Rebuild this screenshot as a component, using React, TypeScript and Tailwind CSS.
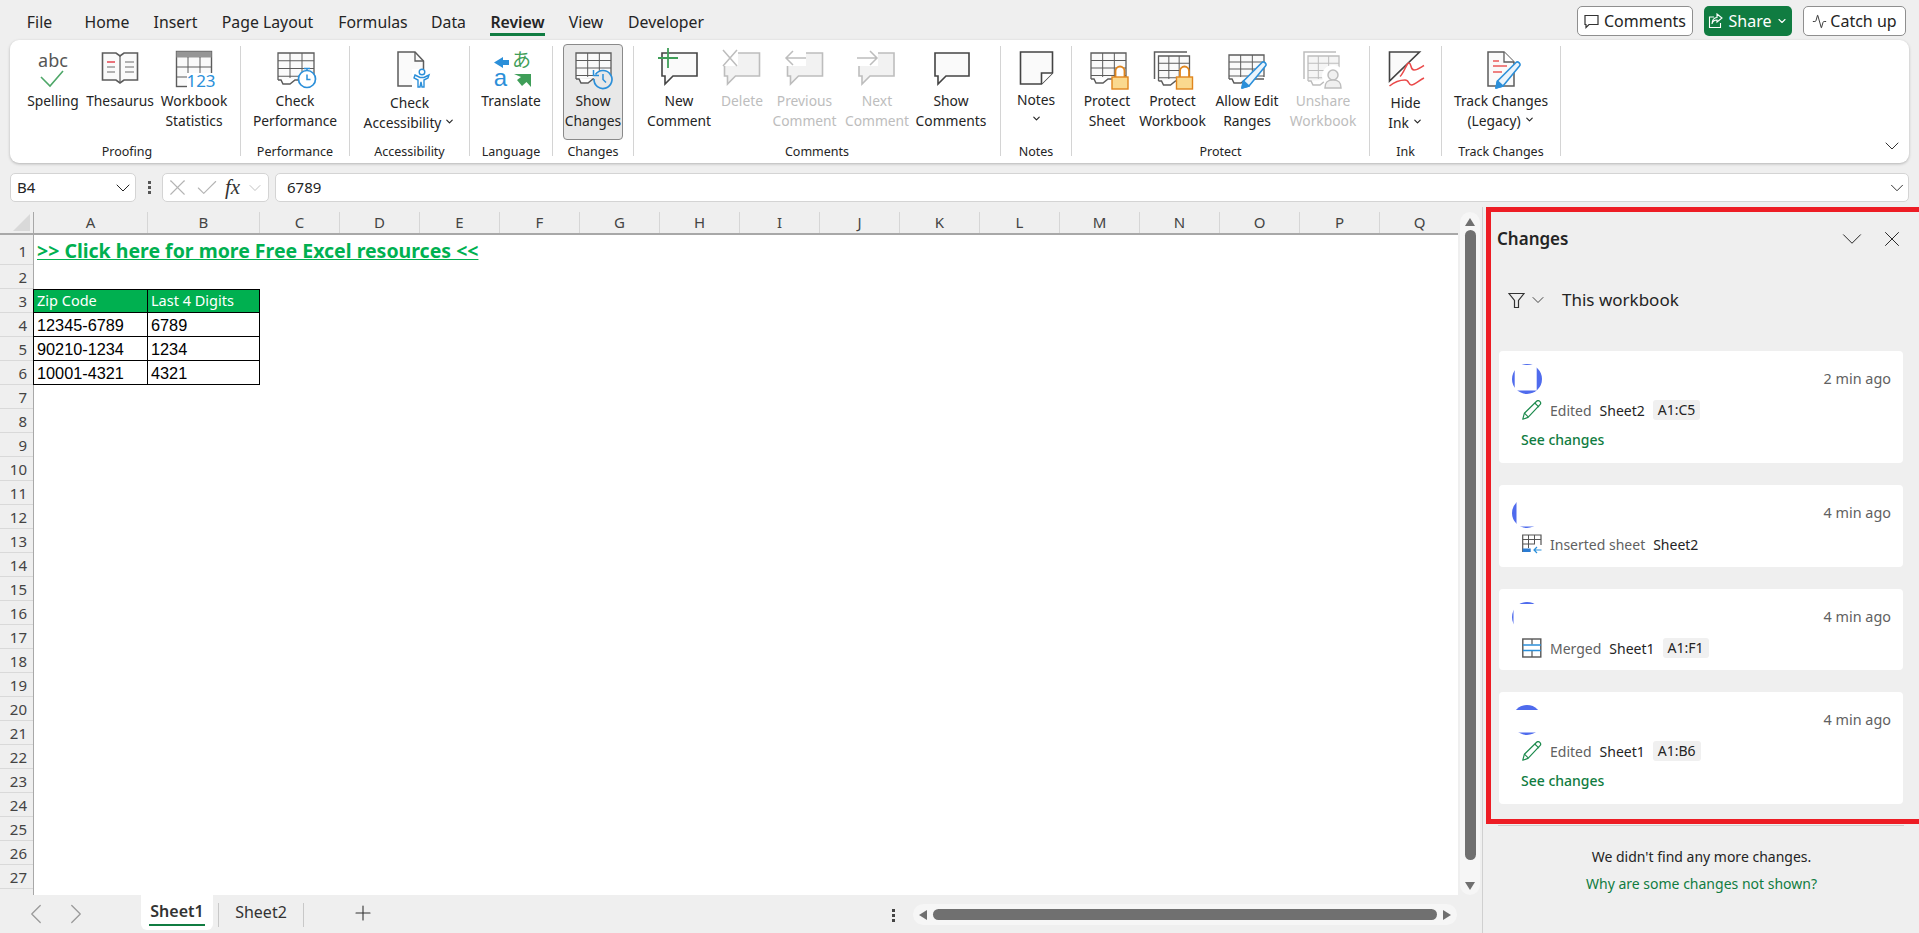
import React from 'react';
import { Activity, Check, ChevronDown, ChevronLeft, ChevronRight, Plus, X } from 'lucide-react';

const BLUE = '#2b8fd9';
const DARK = '#5c5c5c';
const LIGHT = '#bdbdbd';
const FONT = '"Noto Sans", Arial, sans-serif';

const Ico = ({ children }: { children: React.ReactNode }) => (
  <svg width="40" height="40" viewBox="0 0 40 40" fill="none" className="overflow-visible shrink-0">
    {children}
  </svg>
);

// the little sheet with a folded corner that most Review icons share
const Sheet = ({ x, y, w = 35, h = 30, stroke = DARK, fill = '#fafafa' }: { x: number; y: number; w?: number; h?: number; stroke?: string; fill?: string }) => {
  const cw = w / 3;
  const rh = h / 4;
  return (
    <g stroke={stroke} strokeWidth="1.3">
      <path d={`M${x} ${y + h - 4}V${y}H${x + w}V${y + h - 6}`} fill={fill} />
      <path d={`M${x} ${y + h - 4}h3l2 4h7l5-4h${w - 17}`} fill="#fff" strokeWidth="1.5" />
      <path d={`M${x + cw} ${y}v${h - 6}M${x + 2 * cw} ${y}v${h - 6}M${x} ${y + rh}h${w}M${x} ${y + 2 * rh}h${w}M${x} ${y + 3 * rh}h${w}`} strokeWidth="1" />
    </g>
  );
};

const Bubble = ({ x, w = 35, stroke = '#444', fill = '#fafafa' }: { x: number; w?: number; stroke?: string; fill?: string }) => (
  <path d={`M${x} 4H${x + w}V27H${x + 11}L${x + 3} 35V27H${x}Z`} stroke={stroke} strokeWidth="1.6" fill={fill} />
);

const Lock = ({ x }: { x: number }) => (
  <g>
    <path d={`M${x + 3.5} 28v-6a4.5 4.5 0 0 1 9 0v6`} stroke="#e0851d" strokeWidth="1.8" fill="#fff" />
    <rect x={x} y="28" width="16" height="12" fill="#fad98f" stroke="#e0851d" strokeWidth="1.4" />
  </g>
);

const Pencil = ({ x, y, color = BLUE }: { x: number; y: number; color?: string }) => (
  <g stroke={color} strokeWidth="1.6" strokeLinejoin="round">
    <path d={`M${x} ${y}l1.5-7L${x + 20} ${y - 25.5}c1.8-1.8 5.5 1.5 3.5 3.5L${x + 7} ${y - 2}Z`} fill="#eaf4fc" />
    <path d={`M${x} ${y}l1.5-7 5.5 5Z`} fill={color} />
  </g>
);

const icons: Record<string, React.ReactNode> = {
  spelling: (
    <Ico>
      <text x="20" y="18" textAnchor="middle" fontSize="18" fill="#555" fontFamily={FONT}>abc</text>
      <path d="M8 28l9 9L30 22" stroke="#4ea768" strokeWidth="1.6" />
    </Ico>
  ),
  book: (
    <Ico>
      <path d="M2.5 4H16l4 3 4-3h13.5V31H24l-4 3-4-3H2.5Z" fill="#fafafa" stroke={DARK} strokeWidth="1.6" />
      <path d="M20 7v27" stroke={DARK} strokeWidth="1.2" />
      <path d="M7 13h8" stroke="#e8636b" strokeWidth="1.8" />
      <path d="M7 18h8M7 23h8M25 13h9M25 18h9M25 23h9" stroke="#9a9a9a" strokeWidth="1.6" />
    </Ico>
  ),
  stats: (
    <Ico>
      <rect x="2.5" y="2.5" width="35" height="35" fill="#fafafa" stroke={DARK} strokeWidth="1.4" />
      <rect x="2.5" y="2.5" width="35" height="6" fill="#969696" />
      <path d="M14 8v30M26 8v16M2 18h36M2 28h12" stroke={DARK} strokeWidth="1" />
      <rect x="13" y="24" width="27" height="16" fill="#fff" />
      <text x="27" y="38" textAnchor="middle" fontSize="17" fill={BLUE} fontFamily={FONT}>123</text>
    </Ico>
  ),
  perf: (
    <Ico>
      <Sheet x={3} y={4} w={36} h={31} />
      <circle cx="32" cy="30" r="8.5" fill="#fff" stroke={BLUE} strokeWidth="1.7" />
      <path d="M29 19.5h6M32 19.5v2M32 25.5v5h3.5" stroke={BLUE} strokeWidth="1.5" />
    </Ico>
  ),
  access: (
    <Ico>
      <path d="M8 3H25L33.5 12V37H8Z" fill="#fafafa" stroke={DARK} strokeWidth="1.5" />
      <path d="M25 3v9h8.5" stroke={DARK} strokeWidth="1.3" />
      <rect x="22" y="20" width="20" height="20" fill="#fff" />
      <circle cx="32" cy="23" r="2.8" stroke={BLUE} strokeWidth="1.4" fill="#fff" />
      <path d="M25 26l5 2.5h4l5-2.5-1 3-4 2v7h-2l-1-5-1 5h-2v-7l-4-2Z" stroke={BLUE} strokeWidth="1.4" fill="#fff" />
    </Ico>
  ),
  translate: (
    <Ico>
      <path d="M3 13.5L12 8V11H18V16H12V19Z" fill={BLUE} />
      <text x="30.5" y="18" textAnchor="middle" fontSize="19" fill="#3f9e58" fontFamily='"Noto Sans CJK JP", sans-serif'>あ</text>
      <text x="9.5" y="36.5" textAnchor="middle" fontSize="24" fill={BLUE} fontFamily='"Liberation Sans", Arial, sans-serif'>a</text>
      <path d="M23 25H40V38L35.5 33 31 37 26 31 30 28Z" fill="#3f9e58" />
    </Ico>
  ),
  show: (
    <Ico>
      <Sheet x={3} y={4} h={30} />
      <circle cx="30" cy="30" r="9" fill="#e8e8e8" stroke="none" />
      <path d="M22.5 25.5A9 9 0 1 1 21 30" stroke={BLUE} strokeWidth="1.7" />
      <path d="M20.5 21v5.5H26M30 25v5.5l3 3" stroke={BLUE} strokeWidth="1.5" />
    </Ico>
  ),
  newComment: (
    <Ico>
      <Bubble x={3} />
      <path d="M-1 9H19M9 -1V19" stroke="#3f9e58" strokeWidth="1.8" />
    </Ico>
  ),
  delete: (
    <Ico>
      <Bubble x={2.5} stroke={LIGHT} fill="#f2f2f2" />
      <rect x="-1" y="0" width="17" height="17" fill="#fff" />
      <path d="M1 1L15 17M15 1L1 17" stroke={LIGHT} strokeWidth="1.5" />
    </Ico>
  ),
  prev: (
    <Ico>
      <Bubble x={2.5} stroke={LIGHT} fill="#f2f2f2" />
      <rect x="0" y="0" width="21" height="17" fill="#fff" />
      <path d="M1 9H21M8 2L1 9l7 7" stroke={LIGHT} strokeWidth="1.5" />
    </Ico>
  ),
  next: (
    <Ico>
      <Bubble x={2} stroke={LIGHT} fill="#f2f2f2" />
      <rect x="0" y="0" width="21" height="17" fill="#fff" />
      <path d="M0 9H20M13 2l7 7-7 7" stroke={LIGHT} strokeWidth="1.5" />
    </Ico>
  ),
  showComments: (
    <Ico>
      <Bubble x={4} w={34} />
    </Ico>
  ),
  notes: (
    <Ico>
      <path d="M4.5 4H36.5V25L25.5 36H4.5Z" fill="#fafafa" stroke="#444" strokeWidth="1.6" />
      <path d="M25.5 36V25H36.5" stroke="#444" strokeWidth="1.6" fill="#fff" />
    </Ico>
  ),
  protectSheet: (
    <Ico>
      <Sheet x={4} y={4} h={30} />
      <Lock x={25} />
    </Ico>
  ),
  protectBook: (
    <Ico>
      <path d="M1.5 30V3H34" stroke={DARK} strokeWidth="1.5" />
      <Sheet x={5.5} y={7} w={31} h={29} />
      <Lock x={23.5} />
    </Ico>
  ),
  allowEdit: (
    <Ico>
      <Sheet x={2} y={6} h={28} />
      <Pencil x={15} y={39} />
    </Ico>
  ),
  unshare: (
    <Ico>
      <path d="M1 30V3H33" stroke={LIGHT} strokeWidth="1.5" />
      <Sheet x={5} y={7} w={31} h={29} stroke={LIGHT} fill="#f5f5f5" />
      <circle cx="30" cy="27" r="11" fill="#fff" />
      <circle cx="30" cy="26" r="5" fill="#f0f0f0" stroke={LIGHT} strokeWidth="1.5" />
      <path d="M22 39c0-7 3.5-8 8-8s8 1 8 8Z" fill="#f0f0f0" stroke={LIGHT} strokeWidth="1.5" />
    </Ico>
  ),
  ink: (
    <Ico>
      <path d="M3.5 3H33.5L3.5 32Z" fill="#fafafa" stroke="#444" strokeWidth="1.6" />
      <path d="M14 27.5C18 24 21 13 23 14c3 1 1 7 5 7s7-3 10-4.5M3.5 37c5-4 11-6 15.5-6s3 5 6.5 5 8-5 12.5-7" stroke="#ea4a4a" strokeWidth="1.6" />
    </Ico>
  ),
  track: (
    <Ico>
      <path d="M7 3H23L33 13V37H7Z" fill="#fafafa" stroke={DARK} strokeWidth="1.5" />
      <path d="M23 3V13H33" stroke={DARK} strokeWidth="1.3" fill="#fff" />
      <path d="M12 12h6M12 17h14M12 23h9" stroke="#ea5a5a" strokeWidth="1.6" />
      <Pencil x={15} y={39} />
    </Ico>
  ),
};

type BtnProps = { icon: string; lines: string[]; w: string; off?: boolean; caret?: boolean; active?: boolean; low?: boolean };

const Caret = () => <ChevronDown size={11} strokeWidth={2.5} className="inline-block ml-[3px] align-[1px]" />;

const RibbonBtn = ({ icon, lines, w, off, caret, active, low }: BtnProps) => (
  <div className={`${w} h-[96px] pt-[4px] flex flex-col items-center shrink-0 rounded-[4px] border ${active ? 'bg-[#e8e8e8] border-[#8a8a8a]' : 'border-transparent'} ${off ? 'text-[#bdbdbd]' : 'text-[#242424]'}`}>
    {icons[icon]}
    <div className={`${low ? 'mt-[4px]' : 'mt-[2px]'} text-[13.8px] leading-[20px] text-center whitespace-nowrap`}>
      {lines.map((l, i) => (
        <div key={l}>
          {l}
          {caret && i === lines.length - 1 && <Caret />}
        </div>
      ))}
    </div>
  </div>
);

const Group = ({ w, label, row = '', labelCls = '', children }: { w: string; label: string; row?: string; labelCls?: string; children: React.ReactNode }) => (
  <>
    <div className={`${w} shrink-0 pt-[4px] flex flex-col`}>
      <div className={`flex justify-center ${row}`}>{children}</div>
      <div className={`mt-[4px] text-[12.5px] leading-[16px] text-center text-[#242424] ${labelCls}`}>{label}</div>
    </div>
    <div className="w-px h-[110px] mt-[6px] bg-[#d4d4d4] shrink-0" />
  </>
);

const tabs = [
  ['File', 'w-[63px]'],
  ['Home', 'w-[72px]'],
  ['Insert', 'w-[65px]'],
  ['Page Layout', 'w-[119px]'],
  ['Formulas', 'w-[92px]'],
  ['Data', 'w-[59px]'],
  ['Review', 'w-[79px]'],
  ['View', 'w-[58px]'],
  ['Developer', 'w-[102px]'],
];

const TopBar = () => (
  <div className="h-[40px] flex shrink-0 pl-[8px] text-[#242424]">
    {tabs.map(([name, w]) => (
      <div key={name} className={`${w} flex justify-center`}>
        <span className={`pt-[11px] leading-[22px] h-[36px] border-b-[3px] text-[15.8px] ${name === 'Review' ? 'border-[#107c41] font-semibold' : 'border-transparent'}`}>
          {name}
        </span>
      </div>
    ))}
    <div className="ml-auto mr-[13px] pt-[6px] flex gap-[11px] text-[16px]">
      <div className="w-[116px] h-[30px] flex items-center justify-center gap-[5px] bg-white border border-[#8f8f8f] rounded-[5px]">
        <svg width="15" height="15" viewBox="0 0 15 15" fill="none">
          <path d="M1 1.5H14V10.5H5L2 13.5V10.5H1Z" stroke="#333" strokeWidth="1.2" />
        </svg>
        Comments
      </div>
      <div className="w-[88px] h-[30px] flex items-center justify-center gap-[5px] bg-[#107c41] text-white rounded-[5px]">
        <svg width="16" height="16" viewBox="0 0 16 16" fill="none">
          <path d="M6 4H1.5V14.5H12.5V10M9 1l5 4-5 4V7C6 7 4.5 8.5 4 11c0-4 2-6.5 5-6.5Z" stroke="#fff" strokeWidth="1.1" />
        </svg>
        Share
        <ChevronDown size={12} strokeWidth={2.2} />
      </div>
      <div className="w-[103px] h-[30px] flex items-center justify-center gap-[3px] bg-white border border-[#8f8f8f] rounded-[5px]">
        <Activity size={15} strokeWidth={1.4} />
        Catch up
      </div>
    </div>
  </div>
);

const Ribbon = () => (
  <div className="mx-[10px] h-[123px] bg-white rounded-[9px] shadow-[0_1px_3px_rgba(0,0,0,0.25)] flex shrink-0 relative">
    <Group w="w-[230px]" label="Proofing" row="pl-[4px]" labelCls="pl-[4px]">
      <RibbonBtn icon="spelling" lines={['Spelling']} w="w-[62px]" />
      <RibbonBtn icon="book" lines={['Thesaurus']} w="w-[72px]" />
      <RibbonBtn icon="stats" lines={['Workbook', 'Statistics']} w="w-[76px]" />
    </Group>
    <Group w="w-[108px]" label="Performance">
      <RibbonBtn icon="perf" lines={['Check', 'Performance']} w="w-[90px]" />
    </Group>
    <Group w="w-[119px]" label="Accessibility">
      <RibbonBtn icon="access" lines={['Check', 'Accessibility']} w="w-[100px]" caret low />
    </Group>
    <Group w="w-[82px]" label="Language">
      <RibbonBtn icon="translate" lines={['Translate']} w="w-[70px]" />
    </Group>
    <Group w="w-[80px]" label="Changes">
      <RibbonBtn icon="show" lines={['Show', 'Changes']} w="w-[60px]" active />
    </Group>
    <Group w="w-[366px]" label="Comments" row="pr-[3px]">
      <RibbonBtn icon="newComment" lines={['New', 'Comment']} w="w-[76px]" />
      <RibbonBtn icon="delete" lines={['Delete']} w="w-[50px]" off />
      <RibbonBtn icon="prev" lines={['Previous', 'Comment']} w="w-[75px]" off />
      <RibbonBtn icon="next" lines={['Next', 'Comment']} w="w-[70px]" off />
      <RibbonBtn icon="showComments" lines={['Show', 'Comments']} w="w-[78px]" />
    </Group>
    <Group w="w-[70px]" label="Notes">
      <div className="w-[60px] h-[96px] pt-[4px] flex flex-col items-center text-[#242424]">
        {icons.notes}
        <div className="mt-[2px] text-[13.8px] leading-[20px]">Notes</div>
        <ChevronDown size={11} strokeWidth={2.5} className="mt-[3px]" />
      </div>
    </Group>
    <Group w="w-[297px]" label="Protect" row="pr-[4px]">
      <RibbonBtn icon="protectSheet" lines={['Protect', 'Sheet']} w="w-[60px]" />
      <RibbonBtn icon="protectBook" lines={['Protect', 'Workbook']} w="w-[71px]" />
      <RibbonBtn icon="allowEdit" lines={['Allow Edit', 'Ranges']} w="w-[78px]" />
      <RibbonBtn icon="unshare" lines={['Unshare', 'Workbook']} w="w-[74px]" off />
    </Group>
    <Group w="w-[71px]" label="Ink">
      <RibbonBtn icon="ink" lines={['Hide', 'Ink']} w="w-[60px]" caret low />
    </Group>
    <Group w="w-[118px]" label="Track Changes">
      <RibbonBtn icon="track" lines={['Track Changes', '(Legacy)']} w="w-[104px]" caret />
    </Group>
    <ChevronDown size={24} strokeWidth={1} className="absolute right-[5px] bottom-[5px] text-[#333]" />
  </div>
);

const FormulaBar = () => (
  <div className="mt-[10px] mx-[10px] h-[29px] flex items-center shrink-0 text-[#242424] text-[15px]">
    <div className="w-[126px] h-full bg-white border border-[#d4d4d4] rounded-[5px] flex items-center pl-[6px] justify-between">
      B4
      <ChevronDown size={24} strokeWidth={1} />
    </div>
    <div className="w-[26px] flex flex-col items-center gap-[2px]">
      <span className="w-[3px] h-[3px] bg-[#555]" />
      <span className="w-[3px] h-[3px] bg-[#555]" />
      <span className="w-[3px] h-[3px] bg-[#555]" />
    </div>
    <div className="w-[107px] h-full bg-white border border-[#d4d4d4] rounded-[5px] flex items-center text-[#b4b4b4]">
      <X size={27} strokeWidth={1} className="shrink-0 ml-[1px]" />
      <Check size={26} strokeWidth={1} className="shrink-0 ml-[3px]" />
      <span className="w-[25px] text-center text-[21px] text-[#333] italic" style={{ fontFamily: '"Liberation Serif", serif' }}>fx</span>
      <ChevronDown size={20} strokeWidth={1} className="shrink-0" />
    </div>
    <div className="ml-[6px] flex-1 h-full bg-white border border-[#d4d4d4] rounded-[5px] flex items-center pl-[11px] justify-between">
      6789
      <ChevronDown size={22} strokeWidth={1} />
    </div>
  </div>
);

const columns = 'ABCDEFGHIJKLMNOPQ'.split('');

const rowData: Record<number, [string, string]> = {
  3: ['Zip Code', 'Last 4 Digits'],
  4: ['12345-6789', '6789'],
  5: ['90210-1234', '1234'],
  6: ['10001-4321', '4321'],
};

const TableCell = ({ row, text, w }: { row: number; text: string; w: string }) => {
  const head = row === 3;
  return (
    <div
      className={`${w} h-full shrink-0 border-b border-r border-black flex items-center pl-[3px] ${head ? 'border-t bg-[#00b050] text-white text-[14.5px]' : 'text-black text-[16.3px] pt-px'}`}
      style={{ fontFamily: head ? FONT : '"Liberation Sans", Arial, sans-serif' }}
    >
      {text}
    </div>
  );
};

const Grid = () => (
  <div className="w-[1458px] flex flex-col overflow-hidden">
    <div className="h-[23px] flex shrink-0 border-b-2 border-[#a8a8a8] text-[15px] text-[#444]">
      <div className="w-[34px] shrink-0 border-r border-[#a8a8a8] flex items-end justify-end pr-[3px] pb-[2px]">
        <div className="w-0 h-0 border-l-[17px] border-l-transparent border-b-[17px] border-b-[#d9d9d9]" />
      </div>
      {columns.map((c, i) => (
        <div key={c} className={`${i === 0 ? 'w-[114px]' : i === 1 ? 'w-[112px]' : 'w-[80px]'} shrink-0 border-r border-[#d6d6d6] flex items-center justify-center`}>
          {c}
        </div>
      ))}
    </div>
    {Array.from({ length: 27 }, (_, i) => i + 1).map(n => (
      <div key={n} className={`flex shrink-0 ${n === 1 ? 'h-[30px]' : 'h-[24px]'}`}>
        <div className={`w-[34px] shrink-0 border-r border-b-0 border-[#a8a8a8] flex items-center justify-end pr-[6px] text-[15px] text-[#444] shadow-[inset_0_-1px_0_#d9d9d9] ${n === 1 ? 'pt-[2px]' : ''}`}>
          {n}
        </div>
        <div className={`flex-1 bg-white flex ${rowData[n] ? 'border-l border-black -ml-px' : ''}`}>
          {n === 1 && (
            <span className="pl-[3px] text-[19.5px] font-bold underline text-[#00b050] whitespace-nowrap leading-[32px]" style={{ fontFamily: FONT }}>
              &gt;&gt; Click here for more Free Excel resources &lt;&lt;
            </span>
          )}
          {rowData[n] && (
            <>
              <TableCell row={n} text={rowData[n][0]} w="w-[114px]" />
              <TableCell row={n} text={rowData[n][1]} w="w-[112px]" />
            </>
          )}
        </div>
      </div>
    ))}
    <div className="flex flex-1">
      <div className="w-[34px] shrink-0 border-r border-[#a8a8a8]" />
      <div className="flex-1 bg-white" />
    </div>
  </div>
);

const VScroll = () => (
  <div className="w-[20px] ml-[2px] bg-[#f6f6f6] rounded-full flex flex-col items-center pt-[6px] pb-[3px]">
    <div className="w-0 h-0 border-x-[5px] border-x-transparent border-b-[8px] border-b-[#707070]" />
    <div className="w-[11px] flex-1 mt-[4px] mb-[22px] bg-[#707070] rounded-full" />
    <div className="w-0 h-0 border-x-[5px] border-x-transparent border-t-[8px] border-t-[#707070] mb-[2px]" />
  </div>
);

const BottomBar = () => (
  <div className="h-[38px] flex shrink-0 text-[#333]">
    <div className="w-[141px] flex pl-[19px] pt-[2px] gap-[6px] text-[#9a9a9a]">
      <ChevronLeft size={34} strokeWidth={0.9} />
      <ChevronRight size={34} strokeWidth={0.9} />
    </div>
    <div className="w-[72px] h-[35px] bg-white rounded-b-[6px] flex flex-col items-center pt-[5px] text-[16px] font-semibold leading-[24px]">
      <span className="border-b-2 border-[#107c41] pb-[1px] px-[1px] leading-[23px]">Sheet1</span>
    </div>
    <div className="w-px h-[24px] mt-[8px] ml-[5px] bg-[#c8c8c8]" />
    <div className="w-[84px] flex justify-center pt-[5px] text-[16px] leading-[24px]">Sheet2</div>
    <div className="w-px h-[24px] mt-[8px] bg-[#c8c8c8]" />
    <Plus size={24} strokeWidth={1.1} className="ml-[47px] mt-[6px] shrink-0" />
    <div className="ml-[517px] flex flex-col gap-[2px] pt-[14px]">
      <span className="w-[3px] h-[3px] bg-[#444]" />
      <span className="w-[3px] h-[3px] bg-[#444]" />
      <span className="w-[3px] h-[3px] bg-[#444]" />
    </div>
    <div className="ml-[18px] mt-[9px] w-[544px] h-[21px] bg-[#f6f6f6] rounded-full flex items-center px-[6px] gap-[6px]">
      <div className="w-0 h-0 border-y-[5px] border-y-transparent border-r-[8px] border-r-[#707070]" />
      <div className="flex-1 h-[11px] bg-[#707070] rounded-full" />
      <div className="w-0 h-0 border-y-[5px] border-y-transparent border-l-[8px] border-l-[#707070]" />
    </div>
  </div>
);

const Avatar = ({ x, y, w, h }: { x: number; y: number; w: number; h: number }) => (
  <svg width="30" height="30" viewBox="0 0 30 30" className="shrink-0">
    <circle cx="15" cy="15" r="15" fill="#4f6bed" />
    <rect x={x} y={y} width={w} height={h} fill="#fff" />
  </svg>
);

const EditIcon = () => (
  <svg width="20" height="20" viewBox="0 0 20 20" fill="none" className="shrink-0">
    <path d="M0.8 19.2l1.6-6L14.6 1.2c1-1 2.2-.8 3.2.2s1.2 2.2.2 3.2L6 17.4Z" stroke="#1c8a4d" strokeWidth="1.2" strokeLinejoin="round" />
    <path d="M12.8 3l4.2 4.2M2.4 13.2l4 4" stroke="#1c8a4d" strokeWidth="1.1" />
  </svg>
);

const InsertIcon = () => (
  <svg width="20" height="20" viewBox="0 0 20 20" fill="none" className="shrink-0">
    <path d="M0.7 18V1H19V11" stroke="#555" strokeWidth="1.2" />
    <path d="M6.5 1v13M12.5 1v9M1 5.5h18M1 10h12" stroke="#555" strokeWidth="1" />
    <rect x="0.7" y="14.5" width="8" height="3.5" fill="#2b7cd3" />
    <path d="M19.5 16H12M15 13l-3 3 3 3" stroke={BLUE} strokeWidth="1.2" />
  </svg>
);

const MergeIcon = () => (
  <svg width="20" height="20" viewBox="0 0 20 20" fill="none" className="shrink-0">
    <rect x="0.8" y="1" width="18" height="18" fill="#fff" stroke="#555" strokeWidth="1.4" />
    <path d="M10 1v5.5M10 13v6" stroke="#555" strokeWidth="1.2" />
    <path d="M1 7h18M1 12.5h18" stroke={BLUE} strokeWidth="1.4" />
  </svg>
);

type CardData = { av: [number, number, number, number]; time: string; icon: React.ReactNode; action: string; sheet: string; range?: string; see?: boolean; h: string };

const cards: CardData[] = [
  { av: [2.7, 1, 22, 25.5], time: '2 min ago', icon: <EditIcon />, action: 'Edited', sheet: 'Sheet2', range: 'A1:C5', see: true, h: 'h-[112px]' },
  { av: [4.5, 0, 26, 28.5], time: '4 min ago', icon: <InsertIcon />, action: 'Inserted sheet', sheet: 'Sheet2', h: 'h-[82px]' },
  { av: [1.5, 2, 29, 28], time: '4 min ago', icon: <MergeIcon />, action: 'Merged', sheet: 'Sheet1', range: 'A1:F1', h: 'h-[81px]' },
  { av: [0, 5, 30, 22.5], time: '4 min ago', icon: <EditIcon />, action: 'Edited', sheet: 'Sheet1', range: 'A1:B6', see: true, h: 'h-[112px]' },
];

const ChangeCard = ({ c }: { c: CardData }) => (
  <div className={`${c.h} w-[404px] ml-[8px] bg-white rounded-[4px] pt-[13px] pl-[13px] pr-[12px] shrink-0`}>
    <div className="flex items-center justify-between">
      <Avatar x={c.av[0]} y={c.av[1]} w={c.av[2]} h={c.av[3]} />
      <span className="text-[14.4px] text-[#616161]">{c.time}</span>
    </div>
    <div className="mt-[6px] h-[20px] pl-[10px] flex items-center gap-[8px] text-[14px]">
      {c.icon}
      <span className="text-[#616161]">{c.action}</span>
      <span className="text-[#242424]">{c.sheet}</span>
      {c.range && <span className="bg-[#f0f0f0] rounded-[3px] px-[5px] h-[20px] leading-[20px] text-[#242424]">{c.range}</span>}
    </div>
    {c.see && <div className="mt-[10px] pl-[9px] text-[14px] leading-[20px] font-medium text-[#107c41]">See changes</div>}
  </div>
);

const ChangesPanel = () => (
  <div className="flex-1 border-l border-[#d0d0d0] pl-[3px] flex flex-col min-w-0">
    <div className="h-[617px] border-[5px] border-r-0 border-[#ed1c24] flex flex-col shrink-0">
      <div className="h-[54px] flex items-center pl-[6px] shrink-0 text-[#242424]">
        <span className="text-[17px] font-semibold">Changes</span>
        <ChevronDown size={34} strokeWidth={0.7} className="ml-auto mr-[10px]" />
        <X size={26} strokeWidth={0.9} className="mr-[14px]" />
      </div>
      <div className="h-[68px] flex items-center pl-[17px] shrink-0 text-[#242424]">
        <svg width="17" height="17" viewBox="0 0 17 17" fill="none">
          <path d="M1 1.5H16L10.5 8.5V15.5H6.5V8.5Z" stroke="#333" strokeWidth="1.2" />
        </svg>
        <ChevronDown size={20} strokeWidth={1} className="ml-[3px]" />
        <span className="ml-[14px] text-[17px]">This workbook</span>
      </div>
      <div className="mt-[17px] flex flex-col gap-[22px]">
        {cards.map((c, i) => (
          <ChangeCard key={i} c={c} />
        ))}
      </div>
    </div>
    <div className="mt-px mx-[12px] h-px bg-[#cfcfcf] w-[406px]" />
    <div className="mt-[21px] pr-[2px] text-center text-[14px] leading-[20px] text-[#242424]">We didn't find any more changes.</div>
    <div className="mt-[7px] pr-[2px] text-center text-[14px] leading-[20px] text-[#107c41]">Why are some changes not shown?</div>
  </div>
);

export default function App() {
  return (
    <div className="w-[1919px] h-[933px] bg-[#efefef] flex flex-col overflow-hidden" style={{ fontFamily: FONT }}>
      <TopBar />
      <Ribbon />
      <FormulaBar />
      <div className="mt-[5px] flex-1 flex min-h-0">
        <div className="w-[1482px] shrink-0 flex flex-col pt-[5px]">
          <div className="flex-1 flex min-h-0">
            <Grid />
            <VScroll />
          </div>
          <BottomBar />
        </div>
        <ChangesPanel />
      </div>
    </div>
  );
}
